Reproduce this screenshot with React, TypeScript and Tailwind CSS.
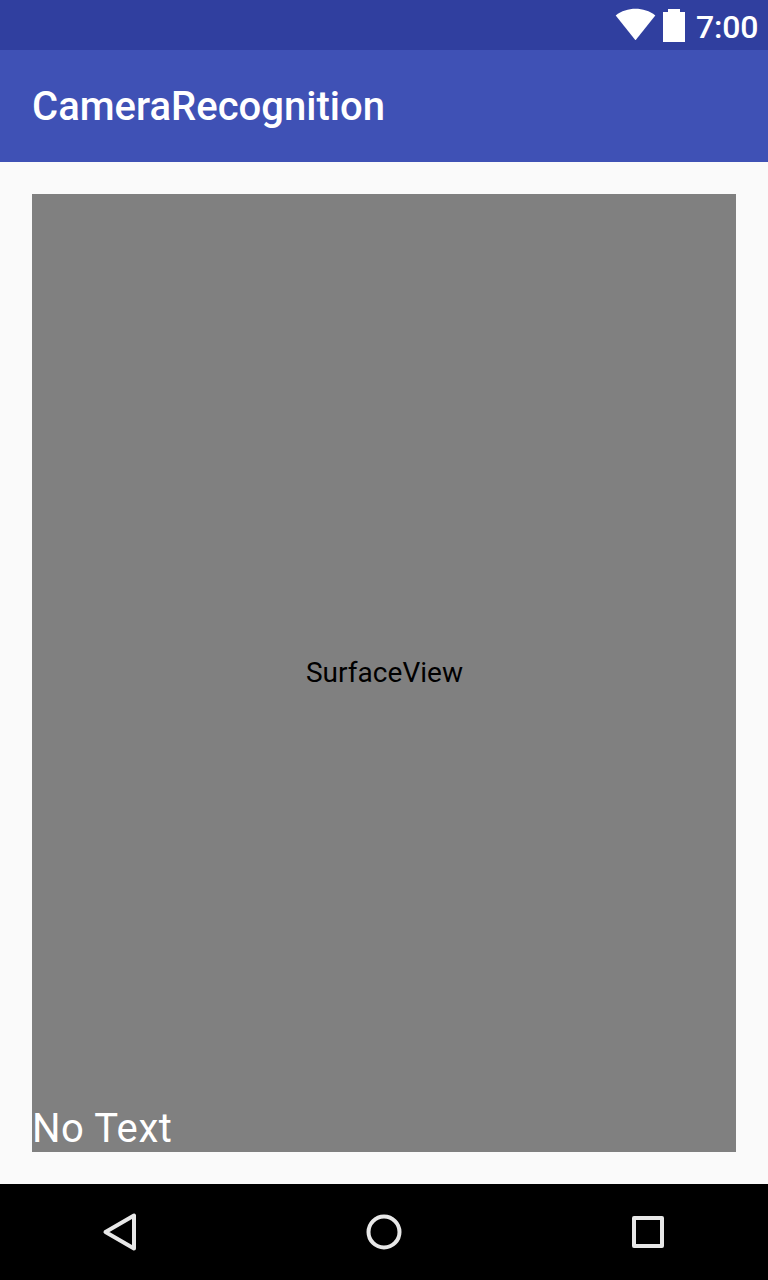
export default function App() {
  return (
    <div className="flex h-[1280px] w-[768px] flex-col overflow-hidden bg-[#fafafa] font-['Roboto',sans-serif]">
      <header className="flex h-[50px] shrink-0 items-start justify-end bg-[#303f9f] pr-[10px] text-white">
        <svg className="mt-2 h-8 w-[41px]" viewBox="0 0 41 32" fill="currentColor">
          <path d="M20.5 32.3 L0.7 7.5 C12 -1.4 29 -1.4 40.3 7.5 Z" />
        </svg>
        <svg className="mt-2 ml-[7px] h-[34px] w-[22px]" viewBox="0 0 22 34" fill="currentColor">
          <path d="M5 1H17V4H22V34H0V4H5Z" />
        </svg>
        <span className="ml-[11px] mt-[7px] w-[62px] whitespace-nowrap text-[32px] leading-[40px] font-medium tracking-[-0.2px]">7:00</span>
      </header>
      <div className="flex h-28 shrink-0 items-center bg-[#3f51b5] pt-0.5 pl-8 text-[40px] leading-none font-medium tracking-[0.02px] text-white">
        <h1>CameraRecognition</h1>
      </div>
      <main className="flex min-h-0 flex-1 p-8">
        <section className="grid flex-1 grid-rows-[1fr] bg-[#808080]">
          <div className="col-start-1 row-start-1 self-center pb-0.5 pl-px text-center text-[28px] leading-[33px] tracking-[0.04px] text-black">SurfaceView</div>
          <div className="col-start-1 row-start-1 self-end text-[40px] leading-[47px] tracking-[0.55px] text-white">No Text</div>
        </section>
      </main>
      <nav className="flex h-24 shrink-0 items-center justify-between bg-black px-[90px] text-[#e8e8e8]">
        <svg className="h-[60px] w-[60px]" viewBox="0 0 60 60" fill="none" stroke="currentColor" strokeWidth="4" strokeLinejoin="round">
          <path d="M44 13.5V46.5L15.5 30Z" transform="translate(0 0)" />
        </svg>
        <svg className="h-[60px] w-[60px]" viewBox="0 0 60 60" fill="none" stroke="currentColor" strokeWidth="4">
          <circle cx="30" cy="30" r="15.5" />
        </svg>
        <svg className="h-[60px] w-[60px]" viewBox="0 0 60 60" fill="none" stroke="currentColor" strokeWidth="4" strokeLinejoin="round">
          <rect x="16" y="16" width="28" height="28" />
        </svg>
      </nav>
    </div>
  );
}
